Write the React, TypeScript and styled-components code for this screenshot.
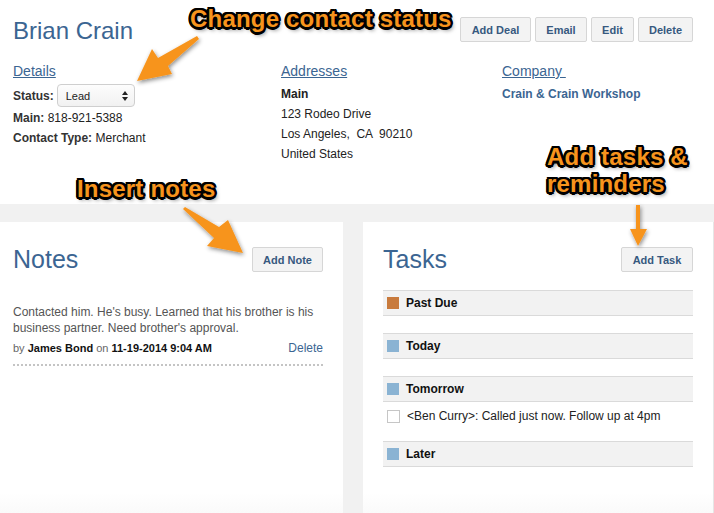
import React from "react";
import styled, { createGlobalStyle } from "styled-components";

const BLUE = "#3b6592";
const ORANGE = "#f7941d";

const GlobalStyle = createGlobalStyle`
  html, body {
    margin: 0;
    padding: 0;
    background: #f1f1f1;
  }
  body {
    font-family: "Liberation Sans", Arial, Helvetica, sans-serif;
    color: #333;
  }
`;

const Page = styled.div`
  position: relative;
  width: 714px;
  height: 513px;
  overflow: hidden;
  background: #f1f1f1;
`;

const Header = styled.section`
  height: 204px;
  box-sizing: border-box;
  background: #fff;
  padding: 17px 21px 0 13px;
`;

const TopRow = styled.div`
  display: flex;
  justify-content: space-between;
  align-items: flex-start;
`;

const Title = styled.h1`
  margin: 1px 0 0;
  font-size: 24px;
  line-height: 26px;
  font-weight: normal;
  color: ${BLUE};
`;

const ButtonGroup = styled.div`
  display: flex;
  gap: 4px;
`;

const Button = styled.button<{ $width?: number }>`
  height: 25px;
  width: ${(p) => (p.$width ? `${p.$width}px` : "auto")};
  padding: 0 10px;
  box-sizing: border-box;
  border: 1px solid #d6d6d6;
  border-radius: 2px;
  background: #f3f3f3;
  color: #37597f;
  font-family: inherit;
  font-size: 11px;
  font-weight: bold;
  cursor: pointer;
`;

const InfoGrid = styled.div`
  display: grid;
  grid-template-columns: 268px 221px 1fr;
  margin-top: 19px;
`;

const SectionLink = styled.a`
  display: inline-block;
  font-size: 14px;
  line-height: 16px;
  color: ${BLUE};
  text-decoration: underline;
  margin-bottom: 5px;
  white-space: pre;
`;

const Column = styled.div`
  display: flex;
  flex-direction: column;
  align-items: flex-start;
`;

const Field = styled.div`
  font-size: 12px;
  line-height: 20px;
  color: #222;
  display: flex;
  align-items: center;
  gap: 3px;
  white-space: pre;
`;

const Label = styled.b`
  color: #333;
`;

const SelectBox = styled.div`
  width: 78px;
  height: 23px;
  box-sizing: border-box;
  border: 1px solid #cfcfcf;
  border-radius: 4px;
  background: linear-gradient(#fdfdfd, #f1f1f1);
  display: flex;
  align-items: center;
  justify-content: space-between;
  padding: 0 6px 0 8px;
  font-size: 11px;
  color: #222;
  margin: 0 0 1px;
`;

const AddrLine = styled.div<{ $bold?: boolean }>`
  font-size: 12px;
  line-height: 20px;
  color: #222;
  font-weight: ${(p) => (p.$bold ? "bold" : "normal")};
  white-space: pre;
`;

const CompanyName = styled.div`
  font-size: 12px;
  line-height: 20px;
  font-weight: bold;
  color: ${BLUE};
`;

const Panels = styled.div`
  display: flex;
  gap: 20px;
  padding-top: 18px;
  height: 309px;
  box-sizing: border-box;
`;

const Panel = styled.section<{ $width?: number }>`
  ${(p) => (p.$width ? `width: ${p.$width}px;` : "flex: 1;")}
  box-sizing: border-box;
  background: linear-gradient(#fff 0%, #fff 93%, #fafafa 100%);
  padding: 25px 20px 0 13px;
  border-right: ${(p) => (p.$width ? "none" : "1px solid #e6e6e6")};
`;

const TasksPanel = styled(Panel)`
  padding-left: 20px;
`;

const PanelHead = styled.div`
  display: flex;
  justify-content: space-between;
  align-items: center;
  height: 25px;
`;

const PanelTitle = styled.h2`
  margin: 0;
  font-size: 25px;
  line-height: 25px;
  font-weight: normal;
  color: ${BLUE};
`;

const NoteText = styled.p`
  margin: 32px 0 0;
  font-size: 12px;
  line-height: 16px;
  color: #555;
`;

const NoteMeta = styled.div`
  display: flex;
  justify-content: space-between;
  align-items: baseline;
  margin-top: 5px;
  padding-bottom: 9px;
  border-bottom: 2px dotted #c4c4c4;
  font-size: 11px;
  color: #666;
`;

const Strong = styled.b`
  color: #111;
`;

const DeleteLink = styled.a`
  font-size: 12px;
  color: ${BLUE};
`;

const TaskList = styled.div`
  margin-top: 18px;
  display: flex;
  flex-direction: column;
`;

const GroupHeader = styled.div`
  height: 26px;
  box-sizing: border-box;
  border-top: 1px solid #dadada;
  border-bottom: 1px solid #dadada;
  background: #f2f2f2;
  display: flex;
  align-items: center;
  gap: 7px;
  padding-left: 4px;
  font-size: 12px;
  font-weight: bold;
  color: #111;
`;

const Swatch = styled.span<{ $color: string }>`
  width: 12px;
  height: 12px;
  background: ${(p) => p.$color};
`;

const GroupBody = styled.div<{ $empty?: boolean }>`
  padding: ${(p) => (p.$empty ? "0" : "7px 0 0 4px")};
  height: ${(p) => (p.$empty ? "17px" : "39px")};
  box-sizing: border-box;
`;

const TaskItem = styled.label`
  display: flex;
  align-items: center;
  gap: 7px;
  height: 14px;
  font-size: 12px;
  color: #222;
`;

const CheckBox = styled.span`
  width: 13px;
  height: 13px;
  box-sizing: border-box;
  border: 1px solid #c6c6c6;
  background: #fff;
`;

const Callout = styled.div<{ $x: number; $y: number }>`
  position: absolute;
  left: ${(p) => p.$x}px;
  top: ${(p) => p.$y}px;
  font-size: 24px;
  line-height: 27px;
  font-weight: bold;
  letter-spacing: 0.2px;
  color: ${ORANGE};
  white-space: pre;
  text-shadow: -2.5px 0 0 #000, 2.5px 0 0 #000, 0 -2.5px 0 #000, 0 2.5px 0 #000,
    -1.8px -1.8px 0 #000, 1.8px -1.8px 0 #000, -1.8px 1.8px 0 #000,
    1.8px 1.8px 0 #000, -1px -2.3px 0 #000, 1px 2.3px 0 #000, -2.3px 1px 0 #000,
    2.3px -1px 0 #000, 2px 3px 4px rgba(0, 0, 0, 0.6);
  pointer-events: none;
`;

const ArrowLayer = styled.svg`
  position: absolute;
  left: 0;
  top: 0;
  pointer-events: none;
`;

const UpDown = () => (
  <svg width="6" height="10" viewBox="0 0 6 10">
    <path d="M3 0 L6 4 H0 Z M3 10 L0 6 H6 Z" fill="#222" />
  </svg>
);

const groups = [
  { name: "Past Due", color: "#c87a3c", tasks: [] as string[] },
  { name: "Today", color: "#8ab3d3", tasks: [] as string[] },
  {
    name: "Tomorrow",
    color: "#8ab3d3",
    tasks: ["<Ben Curry>: Called just now. Follow up at 4pm"],
  },
  { name: "Later", color: "#8ab3d3", tasks: [] as string[] },
];

const App = () => {
  return (
    <Page>
      <GlobalStyle />
      <Header>
        <TopRow>
          <Title>Brian Crain</Title>
          <ButtonGroup>
            <Button $width={71}>Add Deal</Button>
            <Button $width={52}>Email</Button>
            <Button $width={43}>Edit</Button>
            <Button $width={55}>Delete</Button>
          </ButtonGroup>
        </TopRow>

        <InfoGrid>
          <Column>
            <SectionLink>Details</SectionLink>
            <Field>
              <Label>Status:</Label>
              <SelectBox>
                <span>Lead</span>
                <UpDown />
              </SelectBox>
            </Field>
            <Field>
              <span>
                <Label>Main:</Label> 818-921-5388
              </span>
            </Field>
            <Field>
              <span>
                <Label>Contact Type:</Label> Merchant
              </span>
            </Field>
          </Column>
          <Column>
            <SectionLink>Addresses</SectionLink>
            <AddrLine $bold>Main</AddrLine>
            <AddrLine>123 Rodeo Drive</AddrLine>
            <AddrLine>Los Angeles,  CA  90210</AddrLine>
            <AddrLine>United States</AddrLine>
          </Column>
          <Column>
            <SectionLink>Company </SectionLink>
            <CompanyName>Crain &amp; Crain Workshop</CompanyName>
          </Column>
        </InfoGrid>
      </Header>

      <Panels>
        <Panel $width={343}>
          <PanelHead>
            <PanelTitle>Notes</PanelTitle>
            <Button $width={71}>Add Note</Button>
          </PanelHead>
          <NoteText>
            Contacted him. He's busy. Learned that his brother is his business
            partner. Need brother's approval.
          </NoteText>
          <NoteMeta>
            <span>
              by <Strong>James Bond</Strong> on <Strong>11-19-2014 9:04 AM</Strong>
            </span>
            <DeleteLink>Delete</DeleteLink>
          </NoteMeta>
        </Panel>

        <TasksPanel>
          <PanelHead>
            <PanelTitle>Tasks</PanelTitle>
            <Button $width={72}>Add Task</Button>
          </PanelHead>
          <TaskList>
            {groups.map((g) => (
              <React.Fragment key={g.name}>
                <GroupHeader>
                  <Swatch $color={g.color} />
                  {g.name}
                </GroupHeader>
                <GroupBody $empty={g.tasks.length === 0}>
                  {g.tasks.map((t) => (
                    <TaskItem key={t}>
                      <CheckBox />
                      {t}
                    </TaskItem>
                  ))}
                </GroupBody>
              </React.Fragment>
            ))}
          </TaskList>
        </TasksPanel>
      </Panels>

      <ArrowLayer width="714" height="513" viewBox="0 0 714 513">
        <defs>
          <filter id="arrowShadow" x="-30%" y="-30%" width="160%" height="160%">
            <feDropShadow dx="1" dy="2" stdDeviation="2" floodColor="#000" floodOpacity="0.45" />
          </filter>
        </defs>
        <g fill={ORANGE} filter="url(#arrowShadow)">
          <polygon points="197,36 199,39 168,66 172,74 137,81 152,49 158,58" />
          <polygon points="183,209 185,207 219,227 228,220 243,253 207,246 214,238" />
          <polygon points="636,205 640,205 640,229 647,229 638,246 630,229 636,229" />
        </g>
      </ArrowLayer>

      <Callout $x={190} $y={5}>Change contact status</Callout>
      <Callout $x={77} $y={175}>Insert notes</Callout>
      <Callout $x={547} $y={143}>{"Add tasks &\nreminders"}</Callout>
    </Page>
  );
};

export default App;
